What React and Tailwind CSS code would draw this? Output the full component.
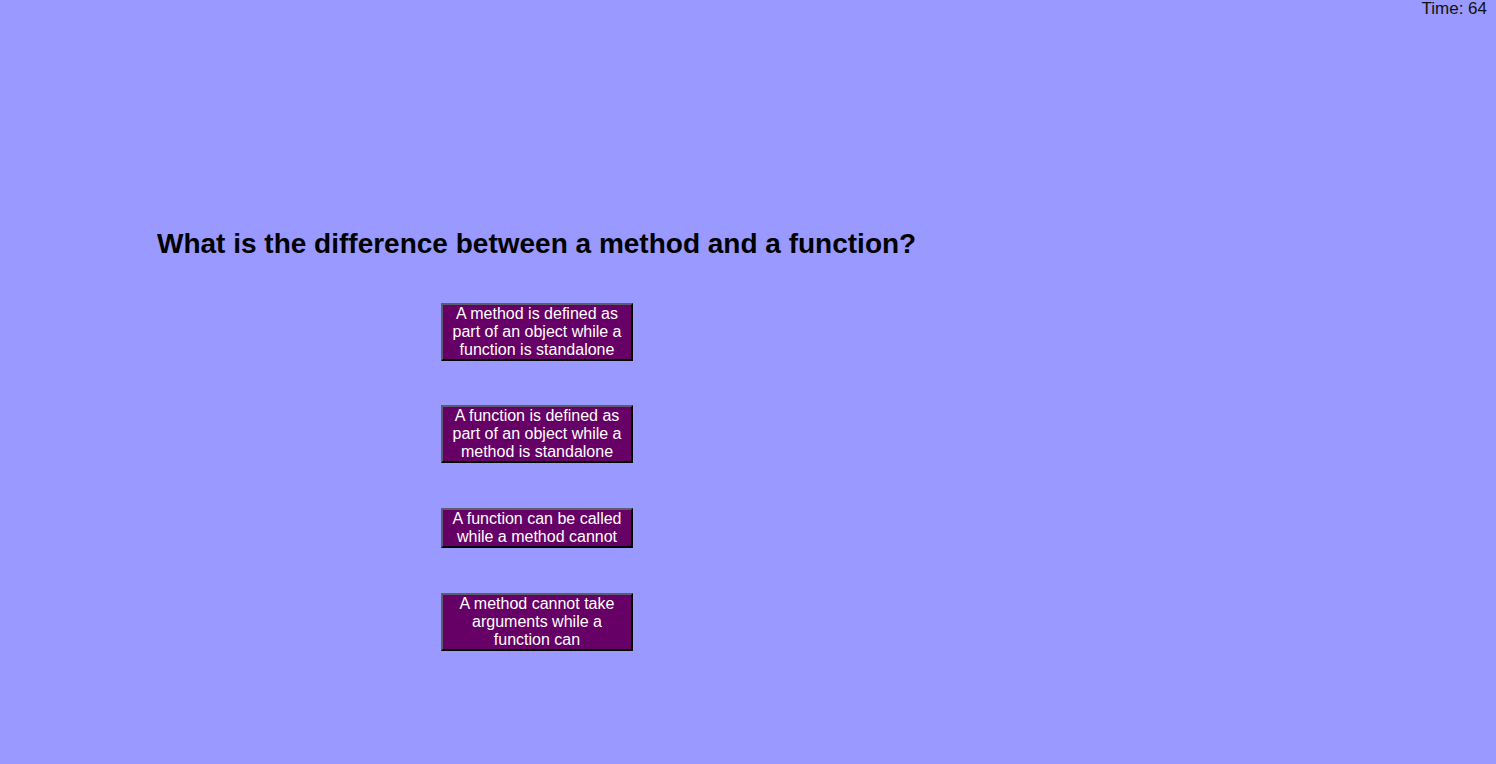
import { useState } from 'react';

const answers = [
  { text: 'A method is defined as part of an object while a function is standalone', gap: 'mt-0' },
  { text: 'A function is defined as part of an object while a method is standalone', gap: 'mt-[44px]' },
  { text: 'A function can be called while a method cannot', gap: 'mt-[45px]' },
  { text: 'A method cannot take arguments while a function can', gap: 'mt-[45px]' },
];

export default function App() {
  const [time] = useState(64);

  return (
    <div className="relative min-h-screen w-full overflow-hidden bg-[#9999ff] font-['Liberation_Sans',Arial,sans-serif] text-black">
      {/* Timer */}
      <div className="absolute right-[9px] top-0 text-[17px] leading-[17px] text-[#111]">
        Time: {time}
      </div>

      <div className="pl-[157px] pt-[228px]">
        <h2 className="text-[28px] font-bold leading-[32px]">
          What is the difference between a method and a function?
        </h2>

        {/* Answer buttons */}
        <div className="ml-[284px] mt-[43px] flex flex-col items-start">
          {answers.map((a) => (
            <button
              key={a.text}
              className={`${a.gap} w-[192px] border-2 border-t-[#5c5c6c] border-l-[#5c5c6c] border-b-black border-r-black bg-[#660066] px-[6px] py-0 text-center text-[16px] leading-[18px] text-white`}
            >
              {a.text}
            </button>
          ))}
        </div>
      </div>
    </div>
  );
}
